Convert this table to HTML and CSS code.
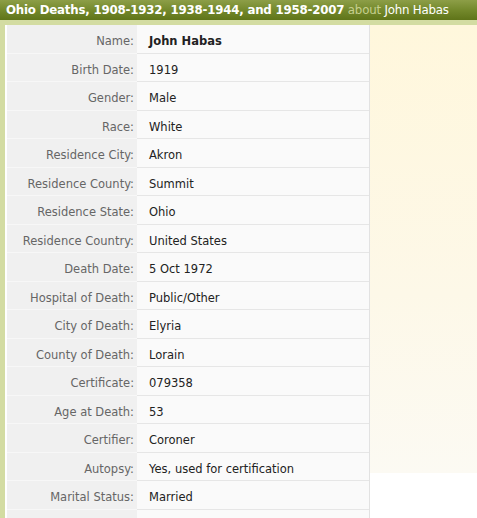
FILE: index.html
```html
<!DOCTYPE html>
<html>
<head>
<meta charset="utf-8">
<link rel="stylesheet" href="styles.css">
</head>
<body>
<div class="page">
  <div class="header"><span class="title">Ohio Deaths, 1908-1932, 1938-1944, and 1958-2007</span> <span class="about">about</span> <span class="who">John Habas</span></div>
  <div class="band"></div>
  <div class="main">
    <div class="records">
      <div class="row"><div class="label">Name:</div><div class="value name">John Habas</div></div>
      <div class="row"><div class="label">Birth Date:</div><div class="value">1919</div></div>
      <div class="row"><div class="label">Gender:</div><div class="value">Male</div></div>
      <div class="row"><div class="label">Race:</div><div class="value">White</div></div>
      <div class="row"><div class="label">Residence City:</div><div class="value">Akron</div></div>
      <div class="row"><div class="label">Residence County:</div><div class="value">Summit</div></div>
      <div class="row"><div class="label">Residence State:</div><div class="value">Ohio</div></div>
      <div class="row"><div class="label">Residence Country:</div><div class="value">United States</div></div>
      <div class="row"><div class="label">Death Date:</div><div class="value">5 Oct 1972</div></div>
      <div class="row"><div class="label">Hospital of Death:</div><div class="value">Public/Other</div></div>
      <div class="row"><div class="label">City of Death:</div><div class="value">Elyria</div></div>
      <div class="row"><div class="label">County of Death:</div><div class="value">Lorain</div></div>
      <div class="row"><div class="label">Certificate:</div><div class="value">079358</div></div>
      <div class="row"><div class="label">Age at Death:</div><div class="value">53</div></div>
      <div class="row"><div class="label">Certifier:</div><div class="value">Coroner</div></div>
      <div class="row"><div class="label">Autopsy:</div><div class="value">Yes, used for certification</div></div>
      <div class="row"><div class="label">Marital Status:</div><div class="value">Married</div></div>
      <div class="row"><div class="label"></div><div class="value"></div></div>
    </div>
    <div class="side"></div>
  </div>
</div>
</body>
</html>
```
FILE: styles.css
```css
html, body {
  margin: 0;
  padding: 0;
  background: #ffffff;
  overflow: hidden;
}
.page {
  width: 477px;
  height: 518px;
  overflow: hidden;
  font-family: "DejaVu Sans", Verdana, sans-serif;
}
.header {
  height: 20px;
  box-sizing: border-box;
  padding: 2px 0 0 6px;
  background: linear-gradient(to bottom, #8d9e47 0%, #74892c 50%, #5f7419 100%);
  color: #ffffff;
  font-size: 11.8px;
  line-height: 17px;
  white-space: nowrap;
  letter-spacing: -0.2px;
}
.title {
  font-weight: bold;
}
.about {
  color: #c6cf8e;
}
.band {
  height: 5px;
  background: #d3dca2;
}
.main {
  display: flex;
  border-left: 5px solid #d3dca2;
  padding-left: 2px;
  height: 493px;
}
.records {
  width: 362px;
  border-right: 1px solid #e2e2e2;
  flex: none;
}
.row {
  display: flex;
  height: 28.5px;
  box-sizing: border-box;
  border-bottom: 1px solid #e6e6e6;
  font-size: 11.5px;
  line-height: 24px;
}
.label {
  width: 130px;
  flex: none;
  background: #f0f0f0;
  color: #666666;
  text-align: right;
  padding: 4px 3px 0 0;
  box-sizing: border-box;
  border-bottom: 1px solid #f7f7f7;
  margin-bottom: -1px;
  white-space: nowrap;
}
.value {
  flex: 1;
  background: #fafafa;
  color: #222222;
  padding: 4px 0 0 12px;
  white-space: nowrap;
}
.name {
  font-weight: bold;
}
.side {
  flex: 1;
  height: 448px;
  background: linear-gradient(to bottom, #fff7dc 0%, #fdf8e8 60%, #fcfaf3 100%);
}
```
